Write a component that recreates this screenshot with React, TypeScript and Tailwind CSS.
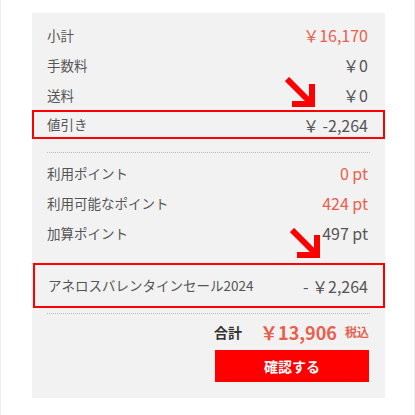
const font = { fontFamily: '"Noto Sans CJK JP", "Noto Sans", sans-serif' };

function Arrow({ className }: { className: string }) {
  return (
    <svg className={className} width="32" height="32" viewBox="0 0 32 32">
      <line x1="2" y1="2" x2="26" y2="26" stroke="#ff0000" strokeWidth="6" />
      <polygon points="30,7 30,30 7,30 7,24 24,24 24,7" fill="#ff0000" />
    </svg>
  );
}

function Row({ label, value, red }: { label: string; value: string; red?: boolean }) {
  return (
    <div className="h-[30px] flex items-center justify-between pl-[15px] pr-[17px]">
      <span className="text-[13.5px] text-[#555]">{label}</span>
      <span className={`text-[16px] ${red ? 'text-[#e8604c]' : 'text-[#555]'}`}>{value}</span>
    </div>
  );
}

export default function App() {
  return (
    <div className="w-[415px] h-[415px] bg-white pt-[13px] pl-[31px] border-x border-[#eee]" style={font}>
      <div className="relative w-[353px] h-[385px] bg-[#f2f2f2] pt-[7px] flex flex-col">
        <Row label="小計" value="￥16,170" red />
        <Row label="手数料" value="￥0" />
        <Row label="送料" value="￥0" />
        <div className="h-[29px] border-2 border-[#ff0000] flex items-center justify-between pl-[13px] pr-[15px]">
          <span className="text-[13.5px] text-[#555]">値引き</span>
          <span className="text-[16px] text-[#555]">￥ -2,264</span>
        </div>

        <div className="mt-[13px] mx-[15px] border-t border-dotted border-[#bbb]" />

        <div className="mt-[5px]">
          <Row label="利用ポイント" value="0 pt" red />
          <Row label="利用可能なポイント" value="424 pt" red />
          <Row label="加算ポイント" value="497 pt" />
        </div>

        <div className="mt-[15px] ml-px h-[45px] border-2 border-[#ff0000] flex items-center justify-between pl-[13px] pr-[15px]">
          <span className="text-[13.5px] text-[#555]">アネロスバレンタインセール2024</span>
          <span className="text-[16px] text-[#555]">- ￥2,264</span>
        </div>

        <div className="mt-[5px] mx-[15px] border-t border-dotted border-[#bbb]" />

        <div className="mt-[6px] h-[24px] flex items-center justify-end px-[16px]">
          <span className="text-[14px] font-bold text-[#333]">合計</span>
          <span className="ml-[18px] text-[18px] font-bold text-[#e8604c]">￥13,906</span>
          <span className="ml-[8px] text-[12px] font-bold text-[#e8604c]">税込</span>
        </div>

        <div className="mt-[6px] flex justify-end px-[16px]">
          <button className="w-[154px] h-[32px] bg-[#ff0000] text-white text-[14px] font-bold">確認する</button>
        </div>

        <Arrow className="absolute left-[253px] top-[64px]" />
        <Arrow className="absolute left-[258px] top-[215px]" />
      </div>
    </div>
  );
}
